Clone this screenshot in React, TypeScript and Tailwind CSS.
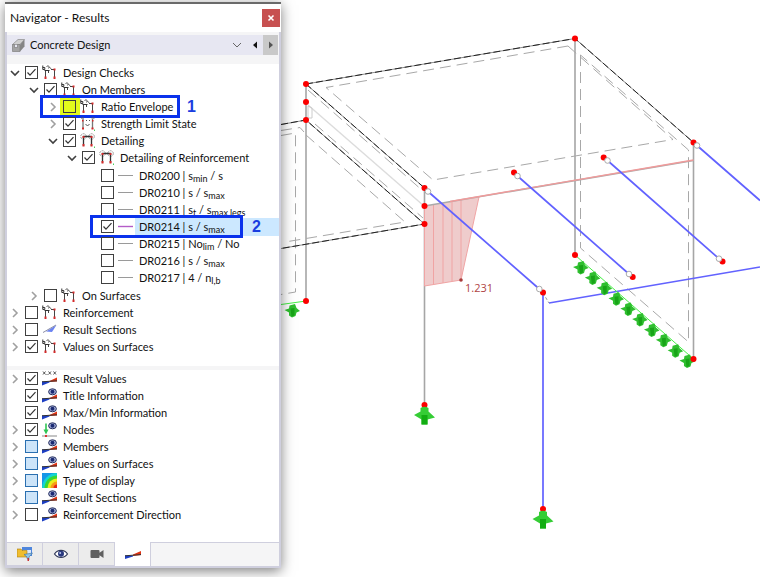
import React from "react";
import clsx from "clsx";

type IconName =
	| "frame"
	| "forces"
	| "detail"
	| "line"
	| "activeLine"
	| "section"
	| "values"
	| "eye"
	| "nodes"
	| "contour";

interface TreeNode {
	label: React.ReactNode;
	icon: IconName;
	state?: "on" | "off" | "partial";
	toggle?: "open" | "closed";
	mark?: "1" | "2";
	highlighted?: boolean;
	children?: TreeNode[];
}

const Sub: React.FC<{ children: React.ReactNode }> = ({ children }) => (
	<span className="relative top-0.5 text-[9px]">{children}</span>
);

const checks: TreeNode[] = [
	{
		label: "Design Checks",
		icon: "frame",
		state: "on",
		toggle: "open",
		children: [
			{
				label: "On Members",
				icon: "frame",
				state: "on",
				toggle: "open",
				children: [
					{
						label: "Ratio Envelope",
						icon: "frame",
						toggle: "closed",
						mark: "1",
					},
					{
						label: "Strength Limit State",
						icon: "forces",
						state: "on",
						toggle: "closed",
					},
					{
						label: "Detailing",
						icon: "detail",
						state: "on",
						toggle: "open",
						children: [
							{
								label: "Detailing of Reinforcement",
								icon: "detail",
								state: "on",
								toggle: "open",
								children: [
									{ label: <>DR0200 | s<Sub>min</Sub> / s</>, icon: "line" },
									{ label: <>DR0210 | s / s<Sub>max</Sub></>, icon: "line" },
									{
										label: <>DR0211 | s<Sub>t</Sub> / s<Sub>max,legs</Sub></>,
										icon: "line",
									},
									{
										label: <>DR0214 | s / s<Sub>max</Sub></>,
										icon: "activeLine",
										state: "on",
										mark: "2",
										highlighted: true,
									},
									{ label: <>DR0215 | No<Sub>lim</Sub> / No</>, icon: "line" },
									{ label: <>DR0216 | s / s<Sub>max</Sub></>, icon: "line" },
									{ label: <>DR0217 | 4 / n<Sub>l,b</Sub></>, icon: "line" },
								],
							},
						],
					},
				],
			},
			{ label: "On Surfaces", icon: "frame", toggle: "closed" },
		],
	},
	{ label: "Reinforcement", icon: "frame", toggle: "closed" },
	{ label: "Result Sections", icon: "section", toggle: "closed" },
	{ label: "Values on Surfaces", icon: "frame", state: "on", toggle: "closed" },
];

const display: TreeNode[] = [
	{ label: "Result Values", icon: "values", state: "on", toggle: "closed" },
	{ label: "Title Information", icon: "eye", state: "on" },
	{ label: "Max/Min Information", icon: "eye", state: "on" },
	{ label: "Nodes", icon: "nodes", state: "on", toggle: "closed" },
	{ label: "Members", icon: "eye", state: "partial", toggle: "closed" },
	{ label: "Values on Surfaces", icon: "eye", state: "partial", toggle: "closed" },
	{ label: "Type of display", icon: "contour", state: "partial", toggle: "closed" },
	{ label: "Result Sections", icon: "eye", state: "partial", toggle: "closed" },
	{ label: "Reinforcement Direction", icon: "eye", toggle: "closed" },
];

const Wedges: React.FC = () => (
	<>
		<path d="M0 10.5h7.5v1L0 14.5z" fill="#1d3fc4" />
		<path d="M7.5 10 15 6.5v4l-7.5.5z" fill="#e03414" />
		<path d="M0 10.8 15 9.8" stroke="#333" strokeWidth="1" />
	</>
);

const EyeShape: React.FC = () => (
	<>
		<ellipse cx="10.5" cy="3.8" rx="3.9" ry="3" fill="#a9b3dc" stroke="#26305f" />
		<circle cx="10.5" cy="3.8" r="2" fill="#1b2a72" />
	</>
);

const iconShapes: Record<IconName, React.ReactNode> = {
	frame: (
		<>
			<path d="M3.5 5.500V13M6.500 5.500V8M9 4.500h3.500V13" stroke="#444" fill="none" />
			<path d="M.8.500v4h2V2.500h-2M2.500 5.500h5" stroke="#333" fill="none" />
			<path d="M4.500 1.500 6 .8 7.500 1.800M6 3.200l1.500-.7 1.800 1.200" stroke="#444" strokeWidth=".9" fill="none" />
			<path d="M2.500 11.500h2v2.500h-2zM11.500 11.500h2v2.500h-2zM11.500 3.500h2v2h-2z" fill="#d32a2a" />
		</>
	),
	forces: (
		<>
			<path d="M3 3v10M12.500 3v10" stroke="#777" strokeWidth="1.300" />
			<path d="M1 2h3M11.500 2h3M5.500 8l2 2 2-2M6 4.500h1M9 4.500h1" stroke="#555" fill="none" />
			<path d="M2 11.500h2v2H2zM11.500 11.500h2v2h-2zM2 4h1.500v1.500H2zM12 4h1.500v1.500H12z" fill="#d32a2a" />
			<path d="M14 13.500h1.500V15H14z" fill="#4ccf5c" />
		</>
	),
	detail: (
		<>
			<circle cx="3.500" cy="3.500" r="2.800" stroke="#999" strokeDasharray="2 1" fill="none" />
			<circle cx="11.500" cy="3.500" r="2.800" stroke="#999" strokeDasharray="2 1" fill="none" />
			<path d="M3.500 13V3.500h8V13" stroke="#333" strokeWidth="1.300" fill="none" />
			<path d="M2.500 11h2v2.500h-2zM10.500 11h2v2.500h-2zM2.500 3h2v2h-2zM10.500 3h2v2h-2z" fill="#d32a2a" />
			<path d="M14 13.500h1.500V15H14z" fill="#4ccf5c" />
		</>
	),
	line: <path d="M0 7.500h15" stroke="#9a9a9a" />,
	activeLine: <path d="M0 7.500h15" stroke="#b45cc8" strokeWidth="1.400" />,
	section: (
		<>
			<path d="M4 9.500 14.500 3 10 10z" fill="#6b83f2" />
			<path d="M1 10.500 14 3" stroke="#8b8fa8" />
		</>
	),
	values: (
		<>
			<path
				d="M1 .5l2.500 3M3.500.500 1 3.500M6.500.500l2.500 3M9 .500l-2.500 3M11.500.500l2.500 3M14 .500l-2.500 3M4.500 3.500h1"
				stroke="#444"
				strokeWidth=".9"
			/>
			<Wedges />
		</>
	),
	eye: (
		<>
			<Wedges />
			<EyeShape />
		</>
	),
	nodes: (
		<>
			<path d="M4 1.500V10" stroke="#2fc554" strokeWidth="1.600" />
			<path d="M1.500 7.500h5L4 12.500z" fill="#2fc554" />
			<path d="M0 14h15" stroke="#888" />
			<path d="M3 13h2v2H3z" fill="#d33" />
			<EyeShape />
		</>
	),
	contour: (
		<>
			<path d="M0 0h15v15H0z" fill="#1596e8" />
			<circle cx="15" cy="15" r="15" fill="#13d5d2" />
			<circle cx="15" cy="15" r="12.500" fill="#39d735" />
			<circle cx="15" cy="15" r="9.500" fill="#e8ee1c" />
			<circle cx="15" cy="15" r="6.500" fill="#f79a16" />
			<circle cx="15" cy="15" r="3.500" fill="#e5261b" />
		</>
	),
};

const TreeIcon: React.FC<{ name: IconName }> = ({ name }) => (
	<svg viewBox="0 0 15 15" className="size-[15px] shrink-0 overflow-hidden">
		{iconShapes[name]}
	</svg>
);

const Chevron: React.FC<{ open: boolean }> = ({ open }) => (
	<svg viewBox="0 0 10 10" className="size-2.5" fill="none" strokeWidth="1.6">
		{open ? (
			<path d="M1 3 5 7 9 3" stroke="#404040" />
		) : (
			<path d="M3 1 7 5 3 9" stroke="#a0a0a0" />
		)}
	</svg>
);

const TreeRow: React.FC<{ node: TreeNode }> = ({ node }) => (
	<div className="relative flex h-[17px] items-center">
		<div className="flex w-[15px] shrink-0">
			{node.toggle && (
				<button
					type="button"
					aria-label="Toggle"
					aria-expanded={node.toggle === "open"}
				>
					<Chevron open={node.toggle === "open"} />
				</button>
			)}
		</div>
		<label className="flex h-full flex-1 items-center">
			<span
				className={clsx(
					"grid h-full shrink-0 items-center",
					node.mark === "1" ? "-ml-[3px] w-5 bg-[#e2fb1c] pl-[3px]" : "w-[17px]",
				)}
			>
				<input
					type="checkbox"
					defaultChecked={node.state === "on"}
					className={clsx(
						"peer col-start-1 row-start-1 size-[13px] appearance-none border",
						node.state === "partial"
							? "border-[#2a6fb0] bg-[#cce4f9]"
							: "border-[#404040]",
					)}
				/>
				<svg
					viewBox="0 0 13 13"
					className="pointer-events-none invisible col-start-1 row-start-1 size-[13px] peer-checked:visible"
				>
					<path d="M2.500 6.500 5 9.200l5.500-6" fill="none" stroke="#333" strokeWidth="1.200" />
				</svg>
			</span>
			<TreeIcon name={node.icon} />
			<span
				className={clsx(
					"ml-0.5 flex-1 pl-1 leading-[17px] whitespace-nowrap",
					node.highlighted && "bg-[#cce8ff]",
				)}
			>
				{node.label}
			</span>
		</label>
		{node.mark === "1" && (
			<div className="pointer-events-none absolute -inset-y-[3px] right-[99px] -left-2 border-3 border-[#0a32ec]">
				<strong className="absolute left-full pl-2.5 font-['Liberation_Sans',sans-serif] text-base leading-[17px] text-[#1a3de0]">
					1
				</strong>
			</div>
		)}
		{node.mark === "2" && (
			<div className="pointer-events-none absolute -inset-y-[3px] right-[36px] left-1 border-3 border-[#0a32ec]">
				<strong className="absolute left-full pl-3 font-['Liberation_Sans',sans-serif] text-base leading-[17px] text-[#1a3de0]">
					2
				</strong>
			</div>
		)}
	</div>
);

const Tree: React.FC<{ nodes: TreeNode[]; nested?: boolean }> = ({
	nodes,
	nested,
}) => (
	<ul className={clsx(nested && "pl-[19px]", !nodes[0].toggle && "py-px")}>
		{nodes.map((node, idx) => (
			<li key={idx}>
				<TreeRow node={node} />
				{node.children && <Tree nodes={node.children} nested />}
			</li>
		))}
	</ul>
);

const tabs = [
	{
		title: "Data",
		icon: (
			<>
				<path d="M5 1h10v9H5z" fill="#4f86dc" />
				<path d="M6 4h8v5H6z" fill="#dbe8fa" />
				<path d="M0 3h4l1 1.500h5V11H0z" fill="#f0bd2e" stroke="#a87d12" strokeWidth=".6" />
				<path d="M7 8.500 15.500 7 12 11v3l-2-1.500V11z" fill="#8fc5ea" stroke="#3b6f9c" strokeWidth=".6" />
				<path d="M10.500 12h1.500v3h-1.500z" fill="#c33" />
			</>
		),
	},
	{
		title: "Display",
		icon: (
			<>
				<path d="M1.500 8C4.500 3.200 11.500 3.200 14.500 8 11.500 12.500 4.500 12.500 1.500 8z" fill="#fff" stroke="#303858" strokeWidth="1.200" />
				<circle cx="8" cy="7.800" r="3" fill="#28387e" />
				<circle cx="7.200" cy="7" r="1" fill="#b8c4ee" />
			</>
		),
	},
	{
		title: "Views",
		icon: (
			<path d="M2.500 4h7q1 0 1 1v1.700L14.500 4v8l-4-2.700V11q0 1-1 1h-7q-1 0-1-1V5q0-1 1-1z" fill="#606060" />
		),
	},
	{
		title: "Results",
		icon: (
			<>
				<path d="M0 9.500h8v1L0 13z" fill="#1d3fc4" />
				<path d="M8 8.500 16 5v4l-8 1z" fill="#e03414" />
				<path d="M0 9.800 16 8.600" stroke="#333" />
			</>
		),
	},
];

const Navigator: React.FC = () => (
	<aside className="relative mt-0.5 mb-2.5 ml-[5px] flex w-[276px] shrink-0 flex-col border-t-2 border-[#6a6a6a] bg-[#f5f5f6] shadow-[0_3px_12px_rgba(0,0,0,0.5)]">
		<header className="flex h-7 items-center justify-between bg-white pr-px pl-[5px]">
			<h1 className="text-xs">Navigator - Results</h1>
			<button
				type="button"
				aria-label="Close"
				className="flex size-[18px] items-center justify-center bg-[#c75050]"
			>
				<svg viewBox="0 0 8 8" className="size-2" stroke="#fff" strokeWidth="1.600">
					<path d="M1.500 1.500l5 5M6.500 1.500l-5 5" />
				</svg>
			</button>
		</header>
		<div className="flex flex-1 flex-col border-x-2 border-b-2 border-[#cfcfde]">
			<div className="mt-[3px] flex h-5 items-stretch">
				<button
					type="button"
					className="flex flex-1 items-center bg-[#e7e7f2] pl-[5px] text-left"
				>
					<svg viewBox="0 0 13 13" className="mr-[5px] size-[13px]">
						<path d="M.5 5.500 6 .5h6.500L8 5.500z" fill="#cfcfcf" stroke="#8b8b8b" strokeWidth=".7" />
						<path d="M.5 5.500H2.500V8.500H5.500V5.500H8V12.500H.5z" fill="#a4a4a4" stroke="#808080" strokeWidth=".7" />
						<path d="M8 5.500 12.500.500V7.500L8 12.500z" fill="#858585" />
					</svg>
					<span className="flex-1 leading-5">Concrete Design</span>
					<svg viewBox="0 0 10 10" className="mr-1 size-2.5" fill="none" stroke="#666">
						<path d="M1 3l4 4 4-4" />
					</svg>
				</button>
				<button type="button" aria-label="Previous" className="flex w-[17px] items-center justify-center bg-[#e7e7f2]">
					<svg viewBox="0 0 6 8" className="h-2 w-1.5"><path d="M5 .500v7L1 4z" fill="#111" /></svg>
				</button>
				<button type="button" aria-label="Next" className="mr-px flex w-[15px] items-center justify-center bg-[#c9c9c9]">
					<svg viewBox="0 0 6 8" className="h-2 w-1.5"><path d="M1 .500v7L5 4z" fill="#555" /></svg>
				</button>
			</div>
			<div className="mt-[9px] bg-white pb-[11px] pl-[3px]">
				<Tree nodes={checks} />
			</div>
			<div className="mt-1 flex-1 bg-white pb-[19px] pl-[3px]">
				<Tree nodes={display} />
			</div>
			<nav className="flex h-6 border-t border-[#cfcfde]">
				{tabs.map((tab, idx) => (
					<button
						key={tab.title}
						type="button"
						aria-label={tab.title}
						className={clsx(
							"flex w-9 items-center justify-center border-r border-[#cfcfde]",
							idx === 3 ? "-mt-px bg-white" : "border-b bg-[#ececec]",
						)}
					>
						<svg viewBox="0 0 16 16" className="size-4">
							{tab.icon}
						</svg>
					</button>
				))}
			</nav>
		</div>
	</aside>
);

const nodes = [
	[306, 84], [306, 102], [306, 120], [306, 301], [424.5, 188], [424.5, 206],
	[424.5, 224], [575, 38.500], [693.500, 142.500], [693.500, 359], [575, 255],
	[514, 172.500], [603.700, 157.500], [632.700, 277], [722.500, 261.500],
	[543, 292.500], [424.500, 405], [543, 509],
];

const hinges = [
	[428, 191.500], [517.500, 176], [607.500, 160.500], [697, 145.500],
	[629, 274], [719, 258.700], [539.300, 289],
];

const wallSupports = Array.from({ length: 10 }, (_, i) => [
	581 + i * 11.83,
	267.5 + i * 10.4,
]);

const Model: React.FC = () => (
	<svg viewBox="281 0 479 577" className="h-auto w-full" fill="none">
		<g stroke="#a6a6a6" strokeWidth="1.6">
			<path d="M306 84V301M575 38V255M693.500 142V359M424.500 188V405" />
		</g>
		<g stroke="#a8a8a8" strokeDasharray="11 6">
			<path d="M568 46 326 87.500 433 180 673 139.500" />
			<path d="M568 46 673 139.500" />
			<path d="M580.500 55V248L688.500 342V150z" />
			<path d="M308 90 423 191M315 124 423 218" />
			<path d="M306 135 405 222 285 242M281 130.500 300 127.500 304 132" />
			<path d="M281 135.500 295.500 133V292L281 294.500" />
		</g>
		<path d="M308 105 424 206" stroke="#dcdcdc" strokeWidth="1.4" />
		<path d="M308 106v12h4v-10z" stroke="#ccc" />
		<g stroke="#8c8c8c">
			<path d="M281 124.500 306 120 424.500 224 281 248.500M306 84 575 38.500 693.500 142.500M306 84 424.500 188" />
		</g>
		<g stroke="#222" strokeDasharray="7 3">
			<path d="M281 124.500 306 120 424.500 224 281 248.500M306 84 575 38.500 693.500 142.500M306 84 424.500 188" />
		</g>

		<path d="M424.500 206 479 197 461 280 424.500 286z" fill="#efcccc" />
		<path
			d="M479 197 461 280 424.500 286V206M433.500 204V284M443 203V283M452 201V281M461 200V280"
			stroke="#f0a4a4"
		/>
		<path d="M424.500 206 693.500 160.500" stroke="#aaa" strokeWidth="1.6" />
		<path d="M450 201.500 693.500 160" stroke="#f09b9b" strokeWidth="1.3" />
		<circle cx="461" cy="280" r="1.8" fill="#a83c3c" />
		<text
			x="465"
			y="292"
			fill="#b04444"
			className="font-['Open_Sans',sans-serif] text-[11px]"
		>
			1.231
		</text>

		<g stroke="#6262ff" strokeWidth="1.7">
			<path d="M428 191.500 539.300 289M517.500 176 629 274M607.500 160.500 719 258.700M697 145.500 760 200.500" />
			<path d="M543 292.500V509M549 303 760 267" />
		</g>
		<path d="M543 293 549 303" stroke="#999" strokeDasharray="3 2" />
		<path d="M575 255 693.500 359M281 304.500 306 301" stroke="#46f046" />

		{[...wallSupports, [292.5, 310.5]].map(([x, y], idx) => (
			<g key={idx} transform={`translate(${x} ${y})`}>
				<path d="M-3-5 2.500-6.500 4-2.500 7.500 .5 4 2 3 5.500-.500 7-3.500 5V2L-8-.500-3.500-2z" fill="#2fbf2f" />
				<path d="M-2-2 2-2.500V5L-1 6z" fill="#18a418" />
			</g>
		))}
		{nodes.map(([x, y], idx) => (
			<circle key={idx} cx={x} cy={y} r="3" fill="#fb0000" />
		))}
		{hinges.map(([x, y], idx) => (
			<circle key={idx} cx={x} cy={y} r="2.8" fill="#fff" stroke="#aaa" />
		))}
		{[[424.5, 405], [543, 509]].map(([x, y], idx) => (
			<g key={idx} transform={`translate(${x} ${y})`}>
				<path d="M-4 3Q0 .5 4 3V6.500L10.500 12.500 3 14.500V19.500H-3V14.500L-10.500 10-4 6.500z" fill="#35cd35" />
				<path d="M-3 10H3V19.500H-3z" fill="#12ad12" />
			</g>
		))}
	</svg>
);

export default function App() {
	return (
		<main className="flex min-h-screen items-start bg-white font-['Lato','Open_Sans',sans-serif] text-[11px] text-[#111]">
			<Navigator />
			<section aria-label="Model view" className="min-w-0 flex-1">
				<Model />
			</section>
		</main>
	);
}
